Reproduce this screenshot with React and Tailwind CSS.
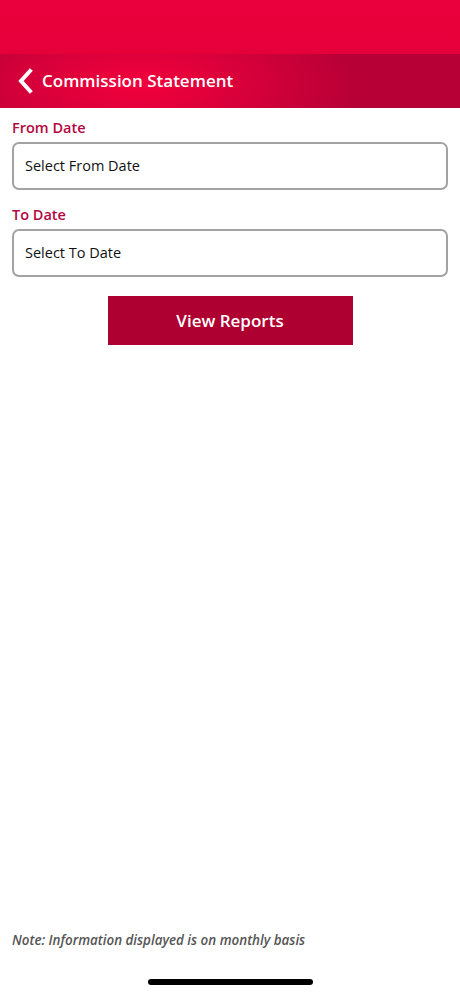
export default function App() {
  return (
    <div
      className="w-[460px] h-[996px] bg-white flex flex-col relative overflow-hidden"
      style={{ fontFamily: '"Open Sans", "Noto Sans", sans-serif' }}
    >
      <div className="h-[54px] bg-[linear-gradient(180deg,#ea003c_0%,#e6003a_100%)]" />
      <div className="h-[54px] flex items-center pl-[16px] bg-[radial-gradient(ellipse_220px_90px_at_140px_30px,#f2003c_0%,#d4003a_55%,#b60036_100%)]">
        <svg width="18" height="26" viewBox="0 0 18 26" className="mr-[8px]">
          <path d="M14 3 L5 13 L14 23" fill="none" stroke="#ffffff" strokeWidth="4" strokeLinecap="square" strokeLinejoin="miter" />
        </svg>
        <span className="text-white text-[17px] font-semibold">Commission Statement</span>
      </div>
      <div className="px-[12px] pt-[10px] flex flex-col">
        <label className="text-[#b3073f] text-[14.5px] font-semibold leading-[20px]">From Date</label>
        <div className="mt-[4px] h-[48px] border-2 border-[#a3a3a3] rounded-[7px] flex items-center px-[11px] text-[14.5px] text-[#111111]">
          Select From Date
        </div>
        <label className="mt-[15px] text-[#b3073f] text-[14.5px] font-semibold leading-[20px]">To Date</label>
        <div className="mt-[4px] h-[48px] border-2 border-[#a3a3a3] rounded-[7px] flex items-center px-[11px] text-[14.5px] text-[#111111]">
          Select To Date
        </div>
        <div className="flex justify-center mt-[19px]">
          <button className="w-[245px] h-[49px] bg-[#ae0131] text-white text-[17px] font-semibold">
            View Reports
          </button>
        </div>
      </div>
      <div className="flex-1" />
      <div className="px-[12px] pb-[46px] text-[13.4px] italic font-semibold text-[#555555]">
        Note: Information displayed is on monthly basis
      </div>
      <div className="absolute left-[148px] top-[979px] w-[165px] h-[6px] rounded-full bg-black" />
    </div>
  );
}
